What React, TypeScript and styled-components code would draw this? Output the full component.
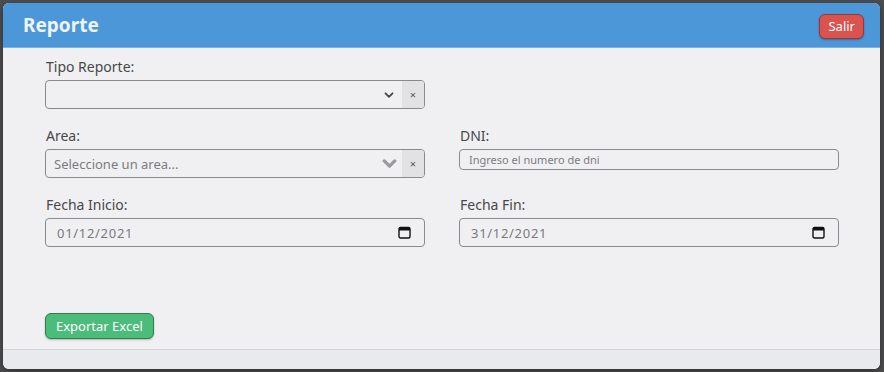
import React from 'react';
import styled, { createGlobalStyle } from 'styled-components';

const GlobalStyle = createGlobalStyle`
    html, body {
        margin: 0;
        padding: 0;
        background: #4d4d4f;
    }
    body {
        font-family: 'Noto Sans', 'Open Sans', sans-serif;
    }
    * {
        box-sizing: border-box;
    }
`;

const Backdrop = styled.div`
    width: 884px;
    height: 372px;
    padding: 3px 4px 3px 3px;
`;

const Modal = styled.div`
    height: 366px;
    display: flex;
    flex-direction: column;
    border-radius: 6px;
    overflow: hidden;
    background: #f0f0f2;
    box-shadow: 0 2px 6px rgba(0, 0, 0, 0.4);
`;

const Header = styled.header`
    height: 45px;
    flex-shrink: 0;
    display: flex;
    align-items: center;
    justify-content: space-between;
    padding: 0 16px 0 20px;
    background: #4b97d7;
    border-bottom: 1px solid #7fb2de;

    h2 {
        margin: 0;
        font-size: 19px;
        font-weight: 700;
        color: #eef4fb;
    }
`;

const Button = styled.button<{ $tone: 'red' | 'green' }>`
    font-family: 'Noto Sans', sans-serif;
    font-size: 13px;
    line-height: 1;
    color: #fff;
    border-radius: 6px;
    cursor: pointer;
    background: ${(p) => (p.$tone === 'red' ? '#d9534f' : '#4cbc7b')};
    border: 1px solid ${(p) => (p.$tone === 'red' ? '#9e3532' : '#2f7f51')};
    box-shadow: 0 1px 2px rgba(0, 0, 0, 0.25);
`;

const SalirButton = styled(Button)`
    height: 25px;
    padding: 0 8px;
    margin-top: 2px;
`;

const ExportButton = styled(Button)`
    height: 26px;
    padding: 0 10px;
`;

const Body = styled.div`
    flex: 1;
    display: flex;
    flex-direction: column;
    padding: 9px 41px 9px 42px;
`;

const Grid = styled.div`
    display: grid;
    grid-template-columns: 1fr 1fr;
    column-gap: 34px;
    row-gap: 17px;
`;

const Field = styled.div`
    display: flex;
    flex-direction: column;
    gap: 3px;
`;

const Label = styled.label`
    font-size: 14px;
    line-height: 20px;
    color: #48484b;
    padding-left: 1px;
`;

const SelectBox = styled.div`
    height: 29px;
    display: flex;
    align-items: stretch;
    border: 1px solid #8a8a8e;
    border-radius: 4px;
    overflow: hidden;
    background: #f0f0f2;
`;

const SelectValue = styled.div`
    flex: 1;
    display: flex;
    align-items: center;
    padding-left: 8px;
    font-size: 13px;
    color: #7c7c80;
`;

const Arrow = styled.div`
    width: 26px;
    display: flex;
    align-items: center;
    justify-content: center;
`;

const Clear = styled.div`
    width: 22px;
    display: flex;
    align-items: center;
    justify-content: center;
    background: #e2e2e5;
    color: #555;
    font-size: 11px;
`;

const TextInput = styled.input`
    height: 21px;
    width: 100%;
    border: 1px solid #8a8a8e;
    border-radius: 4px;
    background: #f0f0f2;
    padding: 0 9px;
    font-family: 'Noto Sans', sans-serif;
    font-size: 11px;
    outline: none;

    &::placeholder {
        color: #7c7c80;
    }
`;

const DateBox = styled.div`
    height: 29px;
    display: flex;
    align-items: center;
    justify-content: space-between;
    padding: 0 13px 0 11px;
    border: 1px solid #8a8a8e;
    border-radius: 4px;
    background: #f0f0f2;
    font-size: 13px;
    letter-spacing: 0.7px;
    color: #7a7a7e;
`;

const Actions = styled.div`
    margin-top: 66px;
    display: flex;
`;

const Footer = styled.footer`
    height: 20px;
    flex-shrink: 0;
    background: #e9eaee;
    border-top: 1px solid #d3d4d9;
`;

function Chevron({ big }: { big?: boolean }) {
    const size = big ? 15 : 10;
    return (
        <svg width={size} height={size} viewBox="0 0 10 10">
            <path
                d="M1.5 3.3 L5 6.8 L8.5 3.3"
                fill="none"
                stroke={big ? '#9a9a9e' : '#444'}
                strokeWidth={big ? 2.2 : 1.8}
                strokeLinecap="round"
                strokeLinejoin="round"
            />
        </svg>
    );
}

function CalendarIcon() {
    return (
        <svg width="13" height="13" viewBox="0 0 13 13">
            <rect x="1" y="1.5" width="11" height="10.5" rx="1.5" fill="none" stroke="#111" strokeWidth="1.4" />
            <rect x="1" y="1.5" width="11" height="3" fill="#111" />
        </svg>
    );
}

function Select({ placeholder, big }: { placeholder?: string; big?: boolean }) {
    return (
        <SelectBox>
            <SelectValue>{placeholder}</SelectValue>
            <Arrow>
                <Chevron big={big} />
            </Arrow>
            <Clear>×</Clear>
        </SelectBox>
    );
}

function DateField({ value }: { value: string }) {
    return (
        <DateBox>
            <span>{value}</span>
            <CalendarIcon />
        </DateBox>
    );
}

export default function App() {
    return (
        <Backdrop>
            <GlobalStyle />
            <Modal>
                <Header>
                    <h2>Reporte</h2>
                    <SalirButton $tone="red">Salir</SalirButton>
                </Header>
                <Body>
                    <Grid>
                        <Field>
                            <Label>Tipo Reporte:</Label>
                            <Select />
                        </Field>
                        <div />
                        <Field>
                            <Label>Area:</Label>
                            <Select placeholder="Seleccione un area..." big />
                        </Field>
                        <Field>
                            <Label>DNI:</Label>
                            <TextInput placeholder="Ingreso el numero de dni" />
                        </Field>
                        <Field>
                            <Label>Fecha Inicio:</Label>
                            <DateField value="01/12/2021" />
                        </Field>
                        <Field>
                            <Label>Fecha Fin:</Label>
                            <DateField value="31/12/2021" />
                        </Field>
                    </Grid>
                    <Actions>
                        <ExportButton $tone="green">Exportar Excel</ExportButton>
                    </Actions>
                </Body>
                <Footer />
            </Modal>
        </Backdrop>
    );
}
